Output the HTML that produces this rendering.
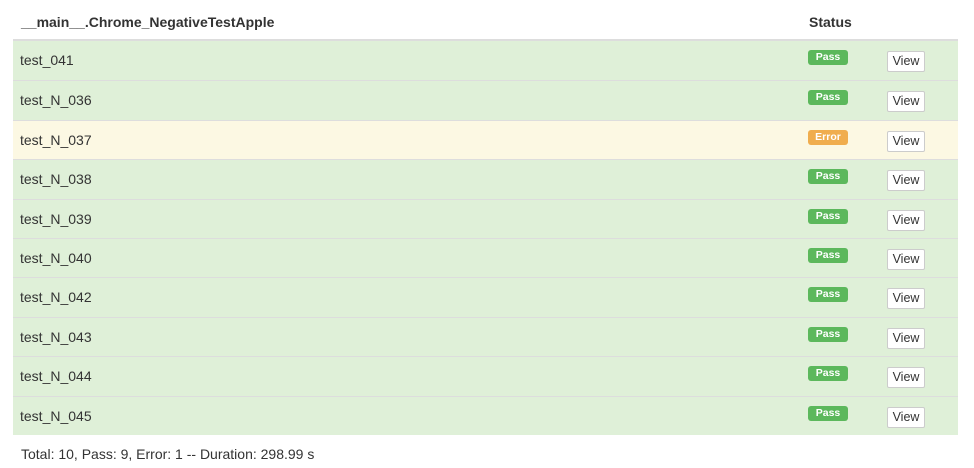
<!DOCTYPE html>
<html><head><style>
body{margin:0;background:#fff;font-family:"Liberation Sans",Arial,sans-serif;color:#333;font-size:14px;width:974px;height:468px;overflow:hidden}
.t{position:absolute;left:13px;top:0;width:945px;border-collapse:collapse}
.h{height:39px;border-bottom:2px solid #ddd;font-weight:bold;position:relative}
.h span{position:absolute;top:14px}
.r{height:38.4px;border-top:1px solid #ddd;position:relative;background:#dff0d8}
.t .r:nth-child(2){border-top:none;height:39.4px}
.r.e{background:#fcf8e3}
.r .n{position:absolute;left:7px;top:11px;font-size:14px}
.b{position:absolute;left:795px;top:9px;width:40px;height:15px;border-radius:3px;background:#5cb85c;color:#fff;font-size:10.5px;font-weight:bold;text-align:center;line-height:15px}
.e .b{background:#f0ad4e}
.v{position:absolute;left:874px;top:10px;width:36px;height:19px;border:1px solid #ccc;border-radius:2px;background:#fff;font-size:12.5px;text-align:center;line-height:19px;color:#333}
.f{position:absolute;left:21px;top:446px;font-size:14px}
</style></head><body>
<div class="t">
<div class="h"><span style="left:8px">__main__.Chrome_NegativeTestApple</span><span style="left:796px">Status</span></div>
<div class="r"><span class="n">test_041</span><span class="b">Pass</span><span class="v">View</span></div>
<div class="r"><span class="n">test_N_036</span><span class="b">Pass</span><span class="v">View</span></div>
<div class="r e"><span class="n">test_N_037</span><span class="b">Error</span><span class="v">View</span></div>
<div class="r"><span class="n">test_N_038</span><span class="b">Pass</span><span class="v">View</span></div>
<div class="r"><span class="n">test_N_039</span><span class="b">Pass</span><span class="v">View</span></div>
<div class="r"><span class="n">test_N_040</span><span class="b">Pass</span><span class="v">View</span></div>
<div class="r"><span class="n">test_N_042</span><span class="b">Pass</span><span class="v">View</span></div>
<div class="r"><span class="n">test_N_043</span><span class="b">Pass</span><span class="v">View</span></div>
<div class="r"><span class="n">test_N_044</span><span class="b">Pass</span><span class="v">View</span></div>
<div class="r"><span class="n">test_N_045</span><span class="b">Pass</span><span class="v">View</span></div>
</div>
<div class="f">Total: 10, Pass: 9, Error: 1 -- Duration: 298.99 s</div>
</body></html>
